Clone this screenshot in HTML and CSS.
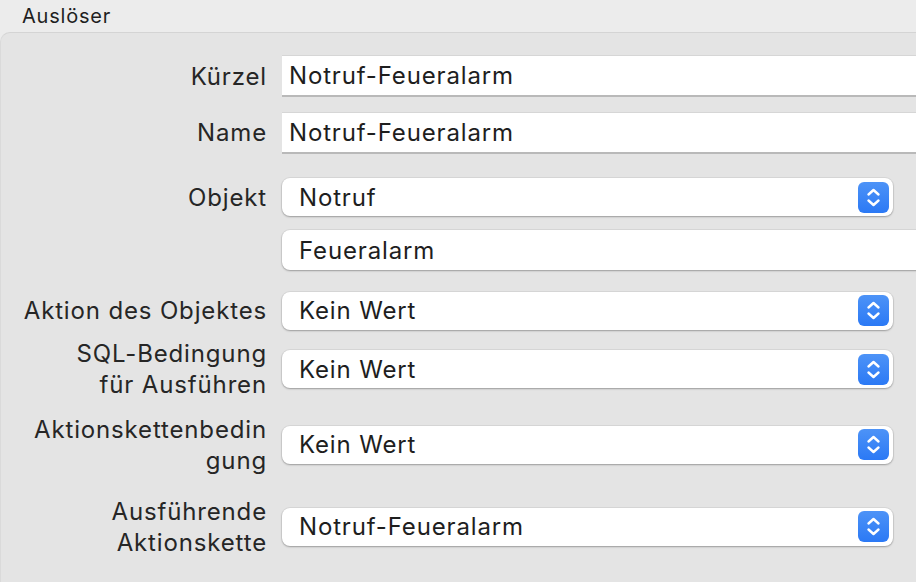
FILE: index.html
```html
<!DOCTYPE html>
<html lang="de">
<head>
<meta charset="utf-8">
<link rel="stylesheet" href="styles.css">
</head>
<body>
<div class="header">Auslöser</div>
<div class="panel">
  <div class="row r1">
    <div class="label">Kürzel</div>
    <div class="field text">Notruf-Feueralarm</div>
  </div>
  <div class="row r2">
    <div class="label">Name</div>
    <div class="field text">Notruf-Feueralarm</div>
  </div>
  <div class="row r3">
    <div class="label">Objekt</div>
    <div class="field popup">Notruf<span class="stepper"><svg viewBox="0 0 31 31" width="31" height="31"><path d="M10.5 12.5 L15.5 8 L20.5 12.5 M10.5 18.5 L15.5 23 L20.5 18.5" fill="none" stroke="#fff" stroke-width="2.4" stroke-linecap="round" stroke-linejoin="round"/></svg></span></div>
  </div>
  <div class="row r4">
    <div class="label"></div>
    <div class="field combo">Feueralarm</div>
  </div>
  <div class="row r5">
    <div class="label">Aktion des Objektes</div>
    <div class="field popup">Kein Wert<span class="stepper"><svg viewBox="0 0 31 31" width="31" height="31"><path d="M10.5 12.5 L15.5 8 L20.5 12.5 M10.5 18.5 L15.5 23 L20.5 18.5" fill="none" stroke="#fff" stroke-width="2.4" stroke-linecap="round" stroke-linejoin="round"/></svg></span></div>
  </div>
  <div class="row r6">
    <div class="label">SQL-Bedingung<br>für Ausführen</div>
    <div class="field popup">Kein Wert<span class="stepper"><svg viewBox="0 0 31 31" width="31" height="31"><path d="M10.5 12.5 L15.5 8 L20.5 12.5 M10.5 18.5 L15.5 23 L20.5 18.5" fill="none" stroke="#fff" stroke-width="2.4" stroke-linecap="round" stroke-linejoin="round"/></svg></span></div>
  </div>
  <div class="row r7">
    <div class="label">Aktionskettenbedin<br>gung</div>
    <div class="field popup">Kein Wert<span class="stepper"><svg viewBox="0 0 31 31" width="31" height="31"><path d="M10.5 12.5 L15.5 8 L20.5 12.5 M10.5 18.5 L15.5 23 L20.5 18.5" fill="none" stroke="#fff" stroke-width="2.4" stroke-linecap="round" stroke-linejoin="round"/></svg></span></div>
  </div>
  <div class="row r8">
    <div class="label">Ausführende<br>Aktionskette</div>
    <div class="field popup">Notruf-Feueralarm<span class="stepper"><svg viewBox="0 0 31 31" width="31" height="31"><path d="M10.5 12.5 L15.5 8 L20.5 12.5 M10.5 18.5 L15.5 23 L20.5 18.5" fill="none" stroke="#fff" stroke-width="2.4" stroke-linecap="round" stroke-linejoin="round"/></svg></span></div>
  </div>
</div>
</body>
</html>
```
FILE: styles.css
```css
html, body {
  margin: 0;
  padding: 0;
  width: 916px;
  height: 582px;
  overflow: hidden;
  background: #ececec;
  font-family: "Inter", "Noto Sans", sans-serif;
  color: #222;
}
.header {
  height: 32px;
  box-sizing: border-box;
  padding: 4px 0 0 22px;
  font-size: 20px;
  letter-spacing: 0.8px;
  line-height: 24px;
  color: #1f1f1f;
}
.panel {
  background: #e4e4e4;
  border-top: 1px solid #d4d4d4;
  border-left: 1px solid #dadada;
  border-radius: 10px 0 0 0;
  height: 560px;
  box-sizing: border-box;
  padding-top: 22px;
  display: flex;
  flex-direction: column;
}
.row {
  display: flex;
  align-items: center;
  gap: 16px;
  height: 38px;
}
.label {
  width: 266px;
  margin-right: -1px;
  flex: none;
  text-align: right;
  font-size: 24px;
  letter-spacing: 0.85px;
  line-height: 31px;
  color: #262626;
  white-space: nowrap;
}
.field {
  box-sizing: border-box;
  background: #fff;
  font-size: 24px;
  letter-spacing: 0.85px;
  color: #1e1e1e;
  display: flex;
  align-items: center;
  position: relative;
}
.text {
  height: 42px;
  flex: none;
  width: 660px;
  padding-left: 7px;
  border-top: 1px solid #d6d6d6;
  border-bottom: 2px solid #b9b9b9;
}
.combo {
  height: 40px;
  flex: none;
  width: 660px;
  padding-left: 17px;
  border-radius: 8px 0 0 8px;
  box-shadow: 0 0 0 1px rgba(0,0,0,0.05), 0 1px 2px rgba(0,0,0,0.28);
}
.popup {
  height: 38px;
  flex: 1;
  margin-right: 23px;
  padding-left: 17px;
  border-radius: 8px;
  box-shadow: 0 0 0 1px rgba(0,0,0,0.05), 0 1px 2px rgba(0,0,0,0.28);
}
.stepper {
  position: absolute;
  right: 4px;
  top: 50%;
  margin-top: -15.5px;
  width: 31px;
  height: 31px;
  border-radius: 6px;
  background: linear-gradient(#4d93f7, #2b79f5);
  display: block;
}
.stepper svg { display: block; }
.r1 { height: 42px; }
.r2 { height: 41px; margin-top: 15px; }
.r3 { margin-top: 25px; }
.r4 { height: 40px; margin-top: 14px; }
.r5 { height: 37px; margin-top: 22px; }
.r6 { margin-top: 21px; }
.r7 { height: 39px; margin-top: 37px; }
.r8 { height: 39px; margin-top: 43px; }
```
